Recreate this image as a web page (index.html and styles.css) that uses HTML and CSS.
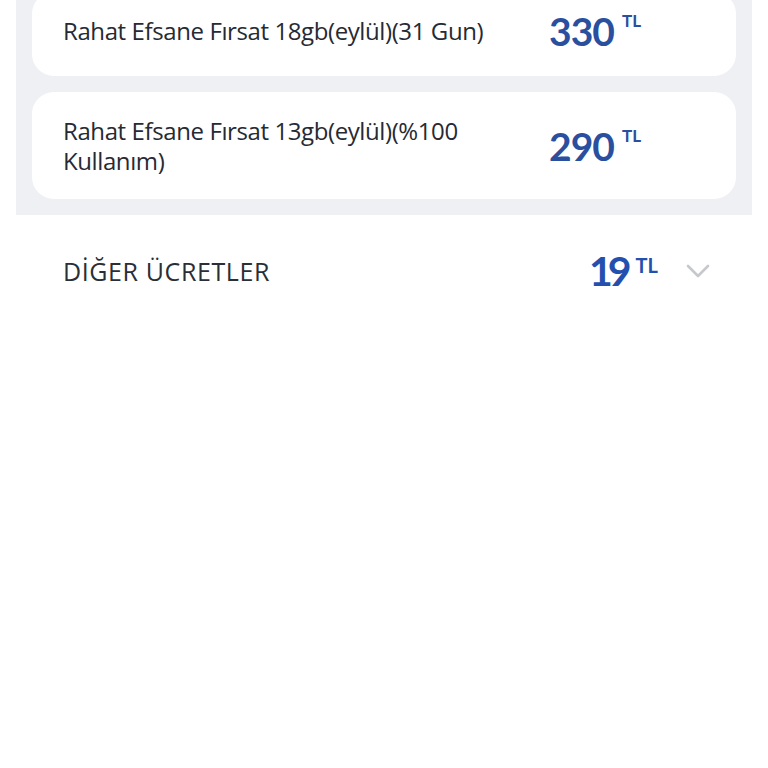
FILE: index.html
```html
<!DOCTYPE html>
<html lang="tr">
<head>
<meta charset="utf-8">
<link rel="stylesheet" href="styles.css">
</head>
<body>
<div class="panel">
  <div class="card card-first">
    <div class="name">Rahat Efsane Fırsat 18gb(eylül)(31 Gun)</div>
    <div class="price"><span class="num">330</span><span class="cur">TL</span></div>
  </div>
  <div class="card">
    <div class="name">Rahat Efsane Fırsat 13gb(eylül)(%100 Kullanım)</div>
    <div class="price"><span class="num">290</span><span class="cur">TL</span></div>
  </div>
</div>
<div class="other">
  <div class="other-title">DİĞER ÜCRETLER</div>
  <div class="other-right">
    <div class="price big"><span class="num">19</span><span class="cur">TL</span></div>
    <svg class="chev" width="24" height="14" viewBox="0 0 24 14"><path d="M2 2 L12 12 L22 2" fill="none" stroke="#c6c8cc" stroke-width="2.6" stroke-linecap="round" stroke-linejoin="round"/></svg>
  </div>
</div>
</body>
</html>
```
FILE: styles.css
```css
html, body { margin: 0; padding: 0; background: #ffffff; }
body { font-family: "Open Sans", Lato, sans-serif; color: #262a33; }
.panel {
  margin: -8px 16px 0;
  padding: 0 16px 16px;
  background: #eef0f3;
  display: flex;
  flex-direction: column;
  gap: 16px;
}
.card {
  background: #ffffff;
  border-radius: 22px;
  padding: 24px 95px 23px 31px;
  display: flex;
  align-items: center;
  justify-content: space-between;
}
.card-first { padding-bottom: 30px; }
.name {
  width: 440px;
  font-size: 24px;
  line-height: 30px;
  letter-spacing: -0.4px;
  color: #262a33;
}
.price { display: flex; align-items: flex-start; height: 30px; color: #2a4f9f; font-weight: 700; font-family: Lato, sans-serif; }
.num { font-size: 39px; line-height: 30px; letter-spacing: -1px; }
.cur { font-size: 17px; line-height: 18px; margin-left: 8px; margin-top: -4px; }
.other {
  display: flex;
  align-items: center;
  justify-content: space-between;
  padding: 34px 58px 0 63px;
}
.other-title { font-size: 25px; letter-spacing: 0.6px; color: #2a2e36; }
.other-right { display: flex; align-items: center; gap: 28px; }
.big { height: 44px; }
.big .num { font-size: 41px; line-height: 44px; letter-spacing: -5px; color: #2350ae; }
.big .cur { color: #2350ae; font-size: 20px; line-height: 20px; margin-left: 9px; margin-top: 6px; }
.chev { display: block; }
```
